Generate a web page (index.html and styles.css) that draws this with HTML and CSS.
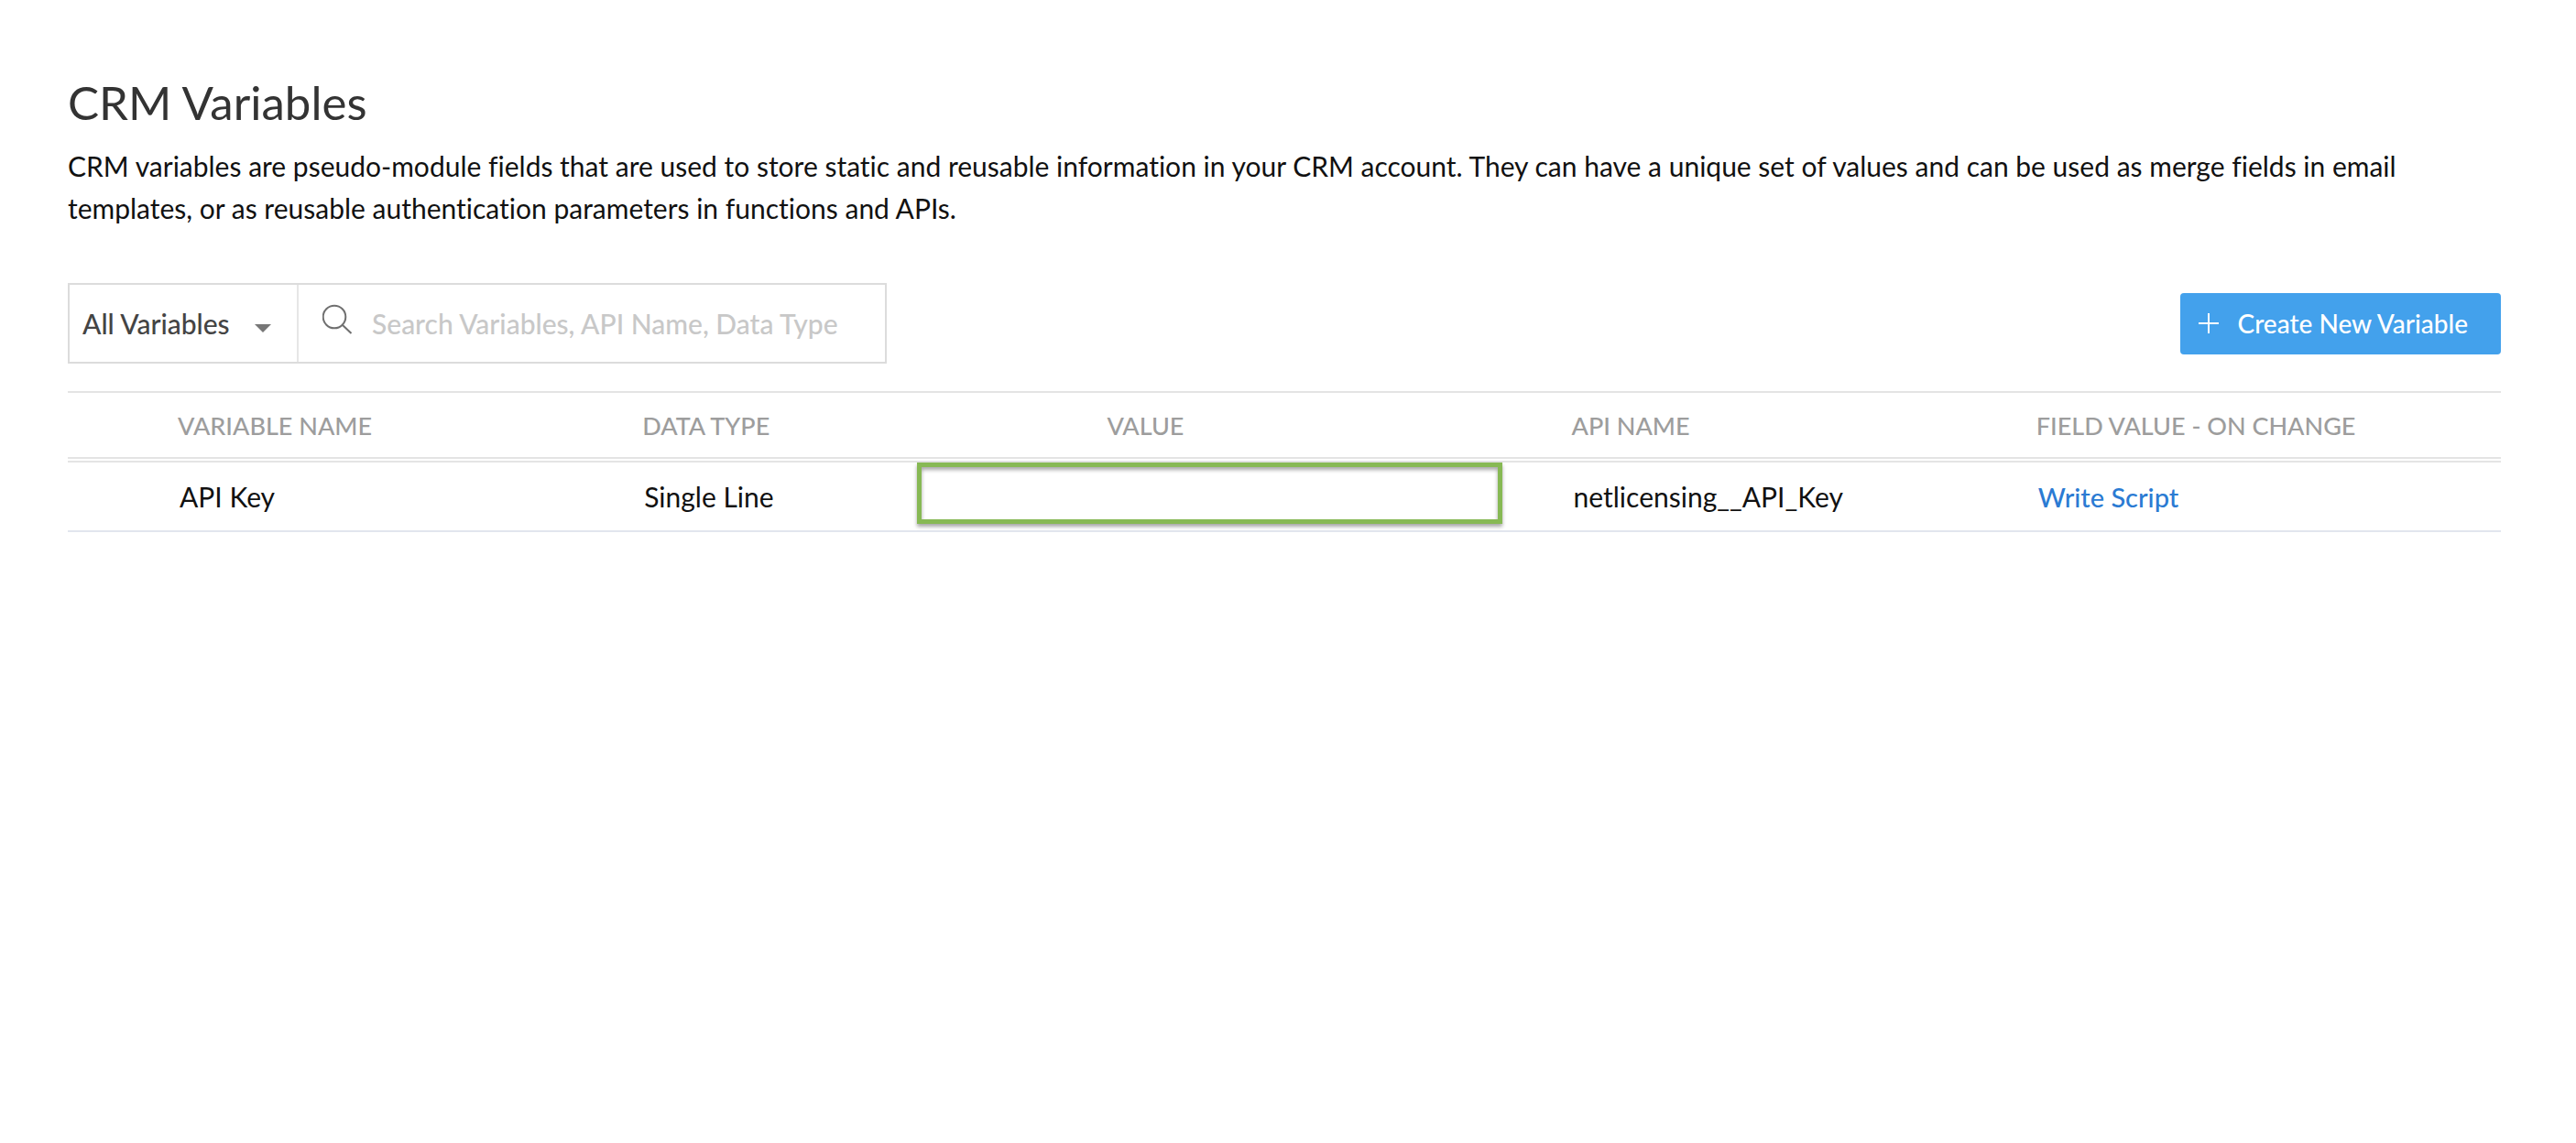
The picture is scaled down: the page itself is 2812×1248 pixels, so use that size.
FILE: index.html
```html
<!DOCTYPE html>
<html lang="en">
<head>
  <meta charset="utf-8">
  <title>CRM Variables</title>
  <link rel="stylesheet" href="styles.css">
</head>
<body>
  <main class="page">
    <h1 class="title">CRM Variables</h1>
    <p class="intro">CRM variables are pseudo-module fields that are used to store static and reusable information in your CRM account. They can have a unique set of values and can be used as merge fields in email templates, or as reusable authentication parameters in functions and APIs.</p>

    <div class="toolbar">
      <div class="filter">
        <div class="picker">
          <select class="picker-select" aria-label="Variable group">
            <option>All Variables</option>
          </select>
          <svg class="picker-caret" width="18" height="9" viewBox="0 0 18 9" aria-hidden="true"><path d="M0 0h18L9 9z" fill="#777"/></svg>
        </div>
        <label class="search">
          <svg class="search-icon" width="34" height="34" viewBox="0 0 34 34" fill="none" stroke="#6f6f6f" stroke-width="2" aria-hidden="true"><circle cx="13" cy="14" r="12.300"/><path d="M21.500 22.500 31.500 32"/></svg>
          <input class="search-input" type="text" placeholder="Search Variables, API Name, Data Type" aria-label="Search variables">
        </label>
      </div>
      <button class="create" type="button">
        <svg width="22" height="22" viewBox="0 0 22 22" stroke="#fff" stroke-width="2" aria-hidden="true"><path d="M11 0v22M0 11h22"/></svg>
        Create New Variable
      </button>
    </div>

    <table class="variables">
      <colgroup><col class="col-lead"><col><col><col><col><col></colgroup>
      <thead>
        <tr>
          <td></td>
          <th scope="col">VARIABLE NAME</th>
          <th scope="col">DATA TYPE</th>
          <th scope="col">VALUE</th>
          <th scope="col">API NAME</th>
          <th scope="col">FIELD VALUE - ON CHANGE</th>
        </tr>
      </thead>
      <tbody>
        <tr>
          <td></td>
          <td>API Key</td>
          <td>Single Line</td>
          <td class="value"><div class="highlight"></div></td>
          <td>netlicensing__API_Key</td>
          <td><a class="script-link" href="#">Write Script</a></td>
        </tr>
      </tbody>
    </table>
  </main>
</body>
</html>
```
FILE: styles.css
```css
* {
  box-sizing: border-box;
}

body {
  margin: 0;
  background: #fff;
  color: #111;
  font: 30px/46px Lato, "Liberation Sans", sans-serif;
  font-variant-ligatures: none;
}

.page {
  padding: 82px 82px 60px 74px;
}

.title {
  margin: 0 0 16px;
  color: #333;
  font-size: 51px;
  font-weight: 400;
  line-height: 60px;
}

.intro {
  margin: 0 0 59px;
}

.toolbar {
  display: flex;
  align-items: center;
  justify-content: space-between;
  margin-bottom: 30px;
}

.filter {
  display: flex;
  width: 894px;
  height: 88px;
  border: 2px solid #dcdcdc;
}

.picker {
  position: relative;
  width: 250px;
  border-right: 2px solid #e6e6e6;
}

.picker-select {
  width: 100%;
  height: 100%;
  padding: 0 50px 0 14px;
  border: 0;
  appearance: none;
  background: transparent;
  color: #444;
  font: inherit;
  font-weight: 500;
}

.picker-caret {
  position: absolute;
  top: 43px;
  right: 28px;
  pointer-events: none;
}

.search {
  display: flex;
  flex: 1;
  gap: 20px;
  padding-left: 26px;
}

.search-icon {
  margin-top: 21px;
}

.search-input {
  flex: 1;
  min-width: 0;
  padding: 0;
  border: 0;
  outline: 0;
  background: transparent;
  color: #444;
  font: inherit;
  font-weight: 500;
}

.search-input::placeholder {
  color: #c8c8c8;
  opacity: 1;
}

.create {
  display: flex;
  align-items: center;
  gap: 21px;
  height: 67px;
  padding: 0 36px 0 20px;
  border: 0;
  border-radius: 4px;
  background: #43a1ec;
  color: #fff;
  font: inherit;
  font-size: 28px;
  font-weight: 500;
}

.variables {
  width: 100%;
  table-layout: fixed;
  border-spacing: 0;
  border-top: 2px solid #e4e4e4;
}

.col-lead {
  width: 120px;
}

.variables th,
.variables td {
  padding: 0;
  text-align: left;
  white-space: nowrap;
}

.variables thead th,
.variables thead td {
  height: 76px;
  padding-top: 2px;
  border-bottom: 6px double #e4e4e4;
  color: #9d9d9d;
  font-size: 27px;
  font-weight: 500;
}

.variables tbody td {
  height: 76px;
  padding-left: 2px;
  border-bottom: 2px solid #e2e6ee;
}

.variables .value {
  position: relative;
}

/* Callout frame drawn over the value cell and its left neighbour */
.highlight {
  position: absolute;
  top: 0;
  left: -207px;
  width: 639px;
  height: 67px;
  border: 5px solid #87b954;
  box-shadow: 0 3px 4px rgba(0, 0, 0, 0.35), inset 0 3px 4px rgba(0, 0, 0, 0.35);
}

.script-link {
  color: #2b7bd3;
  font-size: 29px;
  font-weight: 500;
  text-decoration: none;
}
```
